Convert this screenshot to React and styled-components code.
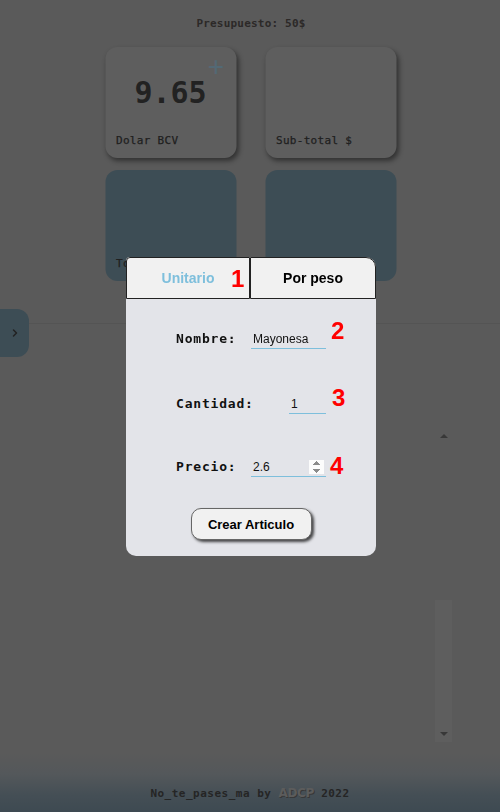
import React from "react";
import styled, { createGlobalStyle } from "styled-components";
import { ChevronRight } from "lucide-react";

const Global = createGlobalStyle`
  html, body { margin: 0; padding: 0; }
  body { background: #b4b4b4; font-family: "DejaVu Sans Mono", monospace; }
  #root { min-height: 812px; }
  * { box-sizing: border-box; }
`;

const Page = styled.div`
  position: relative;
  width: 500px;
  height: 812px;
  display: flex;
  flex-direction: column;
  align-items: center;
  background: #b4b4b4;
  overflow: hidden;
`;

const Budget = styled.div`
  margin-top: 17px;
  height: 14px;
  line-height: 14px;
  font-size: 11px;
  font-weight: bold;
  letter-spacing: 0.2px;
  color: #585250;
  transform: translateX(1px);
`;

const CardGrid = styled.div`
  margin-top: 16px;
  display: grid;
  grid-template-columns: 131px 131px;
  grid-auto-rows: 111px;
  column-gap: 29px;
  row-gap: 12px;
  transform: translateX(0.5px);
`;

const Card = styled.div`
  position: relative;
  border-radius: 12px;
  background: ${(p) => (p.$accent ? "#7a9aaa" : "#bdbdbd")};
  box-shadow: ${(p) => (p.$accent ? "none" : "2px 3px 5px rgba(0,0,0,0.45)")};
  display: flex;
  flex-direction: column;
  padding: 0 11px 10px;
`;

const Value = styled.div`
  flex: 1;
  display: flex;
  align-items: center;
  justify-content: center;
  padding-top: 4px;
  font-size: 30px;
  font-weight: bold;
  color: #444;
`;

const Plus = styled.span`
  position: absolute;
  top: 6px;
  right: 12px;
  font-family: "Liberation Sans", sans-serif;
  font-size: 28px;
  line-height: 28px;
  color: #a6d2ea;
`;

const CardLabel = styled.div`
  font-size: 11px;
  line-height: 14px;
  letter-spacing: 0.3px;
  color: #404040;
  -webkit-text-stroke: 0.25px #404040;
  margin-top: auto;
`;

const Divider = styled.div`
  align-self: stretch;
  margin-top: 42px;
  height: 1px;
  background: #a9a9a9;
`;

const ListArea = styled.div`
  margin-top: 106px;
  width: 404px;
  height: 312px;
  display: flex;
  justify-content: flex-end;
`;

const ScrollTrack = styled.div`
  width: 17px;
  height: 100%;
  display: flex;
  flex-direction: column;
  justify-content: space-between;
  align-items: center;
  background: linear-gradient(to bottom, transparent 0, transparent 170px, #bcbcbc 170px);
  padding: 4px 0 6px;
`;

const Arrow = styled.div`
  width: 0;
  height: 0;
  border-left: 4px solid transparent;
  border-right: 4px solid transparent;
  ${(p) =>
    p.$down
      ? "border-top: 4px solid #707070;"
      : "border-bottom: 4px solid #707070;"}
`;

const Footer = styled.footer`
  margin-top: auto;
  align-self: stretch;
  height: 58px;
  display: flex;
  align-items: flex-end;
  justify-content: center;
  padding-bottom: 12px;
  background: linear-gradient(to bottom, #b4b4b4 0%, #a8b0b6 35%, #8a9eab 70%, #7c94a4 100%);
  font-size: 11px;
  font-weight: bold;
  letter-spacing: 0.5px;
  color: #4a4a4a;
`;

const Brand = styled.span`
  font-family: "DejaVu Sans", sans-serif;
  font-weight: bold;
  font-size: 12px;
  letter-spacing: -0.3px;
  color: #b8b8b8;
  text-shadow: 1px 1px 0 #707070;
  margin: 0 7px;
`;

const SideToggle = styled.button`
  position: absolute;
  left: 0;
  top: 309px;
  width: 29px;
  height: 48px;
  border: none;
  padding: 0;
  border-radius: 0 12px 12px 0;
  background: #7a9aaa;
  color: #444;
  display: flex;
  align-items: center;
  justify-content: center;
`;

const Overlay = styled.div`
  position: fixed;
  inset: 0;
  background: rgba(0, 0, 0, 0.5);
  display: flex;
  align-items: center;
  justify-content: center;
`;

const Modal = styled.div`
  position: relative;
  width: 250px;
  height: 299px;
  margin-left: 2px;
  margin-top: 1px;
  border-radius: 4px 10px 10px 10px;
  background: #e3e4e9;
  display: flex;
  flex-direction: column;
`;

const Tabs = styled.div`
  display: grid;
  grid-template-columns: 124px 126px;
  height: 42px;
`;

const Tab = styled.button`
  position: relative;
  border: 1px solid #222;
  border-radius: ${(p) => (p.$first ? "4px 0 0 0" : "0 10px 0 0")};
  background: #f1f1f1;
  font-family: "Liberation Sans", Arial, sans-serif;
  font-weight: bold;
  font-size: 14px;
  color: ${(p) => (p.$active ? "#7ebfdc" : "#000")};
  padding: 0 0 1px;
`;

const Mark = styled.span`
  position: absolute;
  font-family: "Liberation Sans", Arial, sans-serif;
  font-weight: bold;
  font-size: 24px;
  line-height: 24px;
  color: #ff0000;
`;

const Body = styled.div`
  flex: 1;
  display: flex;
  flex-direction: column;
  align-items: center;
  padding-top: 29px;
`;

const Row = styled.div`
  position: relative;
  width: 150px;
  height: 20px;
  display: flex;
  align-items: center;
  justify-content: space-between;
  margin-bottom: ${(p) => p.$gap || 0}px;
`;

const Label = styled.label`
  font-size: 13px;
  font-weight: bold;
  letter-spacing: 0.8px;
  color: #111;
`;

const Field = styled.input`
  width: ${(p) => p.$w}px;
  height: 18px;
  border: none;
  border-bottom: 1px solid #7ebfdc;
  background: transparent;
  padding: 0 2px;
  font-family: "Liberation Sans", Arial, sans-serif;
  font-size: 12px;
  color: #111;
  outline: none;
  margin-top: 3px;
`;

const CreateButton = styled.button`
  margin-top: 32px;
  width: 121px;
  height: 32px;
  border: 1px solid #666;
  border-radius: 10px;
  background: #f1f1f1;
  box-shadow: 2px 2px 3px rgba(0, 0, 0, 0.7);
  font-family: "Liberation Sans", Arial, sans-serif;
  font-weight: bold;
  font-size: 13px;
  color: #000;
`;

export default function App() {
  return (
    <>
      <Global />
      <Page>
        <Budget>Presupuesto: 50$</Budget>
        <CardGrid>
          <Card>
            <Plus>+</Plus>
            <Value>9.65</Value>
            <CardLabel>Dolar BCV</CardLabel>
          </Card>
          <Card>
            <Value />
            <CardLabel>Sub-total $</CardLabel>
          </Card>
          <Card $accent>
            <Value />
            <CardLabel>Total Bs.</CardLabel>
          </Card>
          <Card $accent>
            <Value />
            <CardLabel>Total $</CardLabel>
          </Card>
        </CardGrid>
        <Divider />
        <ListArea>
          <ScrollTrack>
            <Arrow />
            <Arrow $down />
          </ScrollTrack>
        </ListArea>
        <Footer>
          No_te_pases_ma by<Brand>ADCP</Brand>2022
        </Footer>
        <SideToggle aria-label="abrir">
          <ChevronRight size={12} strokeWidth={3} />
        </SideToggle>
      </Page>
      <Overlay>
        <Modal>
          <Tabs>
            <Tab $first $active>
              Unitario
              <Mark style={{ left: 104, top: 9 }}>1</Mark>
            </Tab>
            <Tab>Por peso</Tab>
          </Tabs>
          <Body>
            <Row $gap={45}>
              <Label>Nombre:</Label>
              <Field $w={75} defaultValue="Mayonesa" />
              <Mark style={{ left: 155, top: -9 }}>2</Mark>
            </Row>
            <Row $gap={43}>
              <Label>Cantidad:</Label>
              <Field $w={37} defaultValue="1" />
              <Mark style={{ left: 156, top: -7 }}>3</Mark>
            </Row>
            <Row>
              <Label>Precio:</Label>
              <Field $w={75} type="number" defaultValue="2.6" autoFocus />
              <Mark style={{ left: 154, top: -2 }}>4</Mark>
            </Row>
            <CreateButton>Crear Articulo</CreateButton>
          </Body>
        </Modal>
      </Overlay>
    </>
  );
}
